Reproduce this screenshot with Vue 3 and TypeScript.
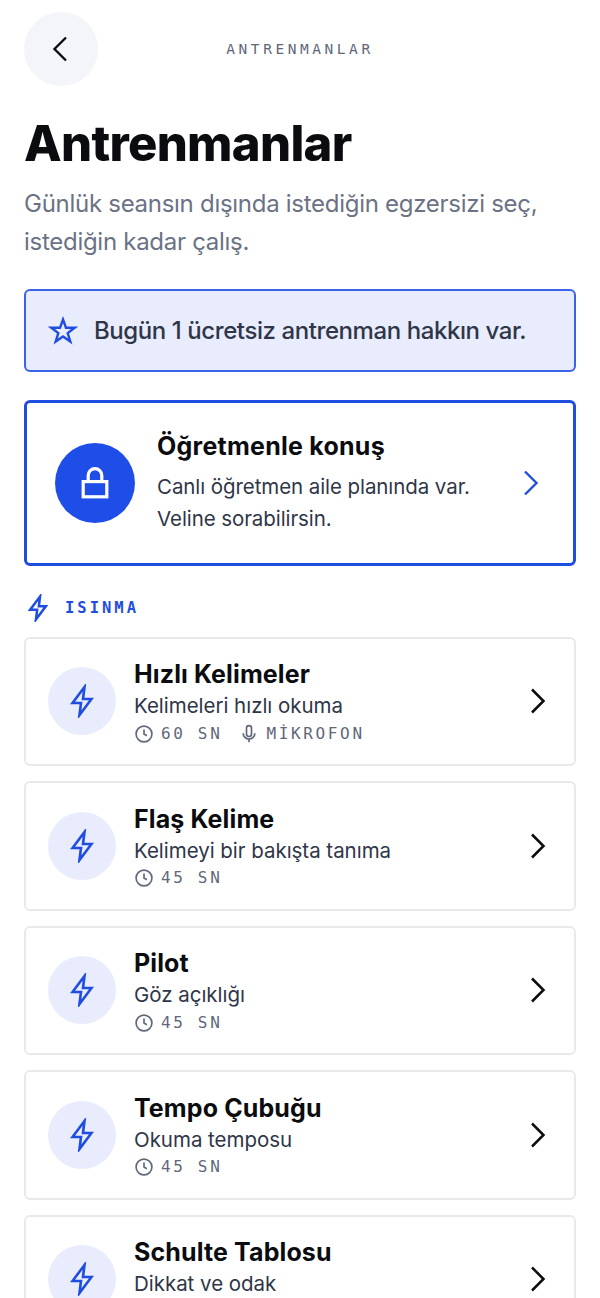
<script setup lang="ts">
interface Drill {
  title: string;
  desc: string;
  time: string;
  mic?: boolean;
}

const drills: Drill[] = [
  { title: "Hızlı Kelimeler", desc: "Kelimeleri hızlı okuma", time: "60 SN", mic: true },
  { title: "Flaş Kelime", desc: "Kelimeyi bir bakışta tanıma", time: "45 SN" },
  { title: "Pilot", desc: "Göz açıklığı", time: "45 SN" },
  { title: "Tempo Çubuğu", desc: "Okuma temposu", time: "45 SN" },
  { title: "Schulte Tablosu", desc: "Dikkat ve odak", time: "60 SN" },
];

const bolt = "M14.5 3 2.5 19H11L9.5 31l12-16H13L14.5 3z";
</script>

<template>
  <div class="page">
    <header class="topbar">
      <button class="back" aria-label="Geri">
        <svg width="30" height="30" viewBox="0 0 24 24" fill="none" stroke="currentColor" stroke-width="1.9">
          <path d="m16 2.8-9.2 9.2 9.2 9.2" />
        </svg>
      </button>
      <span class="topbar-title">ANTRENMANLAR</span>
    </header>

    <h1 class="heading">Antrenmanlar</h1>
    <p class="lead">Günlük seansın dışında istediğin egzersizi seç, istediğin kadar çalış.</p>

    <div class="banner">
      <svg width="30" height="30" viewBox="0 0 30 30" fill="none" stroke="currentColor" stroke-width="2.4">
        <path d="m15 3.5 3 8.3h8.6l-6.9 5.3 2.6 8.4-7.3-5-7.3 5 2.6-8.4-6.9-5.3H12l3-8.3z" />
      </svg>
      <span>Bugün 1 ücretsiz antrenman hakkın var.</span>
    </div>

    <div class="teacher">
      <div class="lock">
        <svg width="32" height="36" viewBox="0 0 32 36" fill="none" stroke="#fff" stroke-width="3.2">
          <rect x="4.2" y="16.6" width="23.6" height="15.2" />
          <path d="M9.2 16.6v-6.1a6.8 6.8 0 0 1 13.6 0v6.1" />
        </svg>
      </div>
      <div class="teacher-text">
        <div class="teacher-title">Öğretmenle konuş</div>
        <div class="teacher-desc">Canlı öğretmen aile planında var.<br />Veline sorabilirsin.</div>
      </div>
      <svg class="teacher-arrow" width="30" height="30" viewBox="0 0 24 24" fill="none" stroke="currentColor" stroke-width="1.9">
        <path d="m8 2.8 9.2 9.2L8 21.2" />
      </svg>
    </div>

    <div class="section">
      <svg class="section-bolt" width="20" height="28" viewBox="0 0 24 34" fill="none" stroke="currentColor" stroke-width="3">
        <path :d="bolt" />
      </svg>
      <span>ISINMA</span>
    </div>

    <div class="list">
      <div v-for="d in drills" :key="d.title" class="row">
        <div class="row-icon">
          <svg width="24" height="34" viewBox="0 0 24 34" fill="none" stroke="currentColor" stroke-width="2.6">
            <path :d="bolt" />
          </svg>
        </div>
        <div class="row-text">
          <div class="row-title">{{ d.title }}</div>
          <div class="row-desc">{{ d.desc }}</div>
          <div class="row-meta">
            <span class="meta-item">
              <svg width="20" height="20" viewBox="0 0 24 24" fill="none" stroke="currentColor" stroke-width="2">
                <circle cx="12" cy="12" r="9.5" />
                <path d="M12 6.5V12l3.5 2" />
              </svg>
              {{ d.time }}
            </span>
            <span v-if="d.mic" class="meta-item">
              <svg width="20" height="20" viewBox="0 0 24 24" fill="none" stroke="currentColor" stroke-width="2">
                <rect x="9" y="2" width="6" height="13" rx="3" />
                <path d="M5 11a7 7 0 0 0 14 0M12 18v4" />
              </svg>
              MİKROFON
            </span>
          </div>
        </div>
        <svg class="row-arrow" width="30" height="30" viewBox="0 0 24 24" fill="none" stroke="currentColor" stroke-width="2">
          <path d="m8 2.8 9.2 9.2L8 21.2" />
        </svg>
      </div>
    </div>
  </div>
</template>

<style>
html,
body {
  margin: 0;
  background: #fff;
  overflow: hidden;
}
</style>

<style scoped>
.page {
  height: 1298px;
  overflow: hidden;
  box-sizing: border-box;
  padding: 12px 24px 0;
  font-family: Inter, "Liberation Sans", sans-serif;
  background: #fff;
  color: #0b0c10;
}

.topbar {
  position: relative;
  display: flex;
  align-items: center;
  justify-content: center;
  height: 74px;
}

.back {
  position: absolute;
  left: 0;
  top: 0;
  width: 74px;
  height: 74px;
  display: flex;
  align-items: center;
  justify-content: center;
  padding: 0;
  border: 0;
  border-radius: 50%;
  background: #f3f5f8;
  color: #0b0c10;
}

.topbar-title {
  font-family: "DejaVu Sans Mono", monospace;
  font-size: 14.5px;
  letter-spacing: 3.55px;
  color: #5f6779;
}

.heading {
  margin: 28px 0 0;
  font-size: 49px;
  line-height: 60px;
  font-weight: 800;
  letter-spacing: -0.7px;
}

.lead {
  margin: 11px 0 0;
  font-size: 24px;
  line-height: 38px;
  letter-spacing: -0.28px;
  color: #6b7285;
}

.banner {
  margin-top: 28px;
  height: 83px;
  box-sizing: border-box;
  display: flex;
  align-items: center;
  gap: 16px;
  padding: 0 22px;
  background: #e8ecfd;
  border: 2px solid #3a63ea;
  border-radius: 6px;
  color: #1f4de0;
}

.banner span {
  font-size: 24px;
  font-weight: 500;
  letter-spacing: -0.42px;
  color: #2f3648;
}

.teacher {
  margin-top: 28px;
  height: 166px;
  box-sizing: border-box;
  display: flex;
  align-items: center;
  gap: 22px;
  padding: 0 28px;
  border: 3px solid #1f4de0;
  border-radius: 6px;
}

.lock {
  flex: none;
  width: 80px;
  height: 80px;
  border-radius: 50%;
  background: #1f4de8;
  display: flex;
  align-items: center;
  justify-content: center;
}

.teacher-text {
  flex: 1;
  min-width: 0;
  white-space: nowrap;
}

.teacher-title {
  font-size: 25px;
  line-height: 30px;
  font-weight: 700;
  letter-spacing: 0.25px;
}

.teacher-desc {
  margin-top: 10px;
  font-size: 20.5px;
  line-height: 32px;
  letter-spacing: -0.08px;
  color: #2f3648;
}

.teacher-arrow {
  color: #1f4de0;
  flex: none;
}

.section {
  margin-top: 27px;
  height: 30px;
  display: flex;
  align-items: center;
  gap: 17px;
  padding-left: 4px;
  color: #1f4de0;
  font-family: "DejaVu Sans Mono", monospace;
  font-size: 15.5px;
  font-weight: 700;
  letter-spacing: 3px;
}

.list {
  margin-top: 13.5px;
  display: flex;
  flex-direction: column;
  gap: 15px;
}

.row {
  flex: none;
  height: 129.5px;
  box-sizing: border-box;
  display: flex;
  align-items: center;
  gap: 18px;
  padding: 0 22px;
  border: 2px solid #e7e9ed;
  border-radius: 6px;
}

.row-icon {
  flex: none;
  width: 68px;
  height: 68px;
  border-radius: 50%;
  background: #e8ecfd;
  color: #1f4de0;
  display: flex;
  align-items: center;
  justify-content: center;
}

.row-text {
  flex: 1;
  min-width: 0;
  padding-top: 2px;
  white-space: nowrap;
}

.row-title {
  font-size: 25px;
  line-height: 33px;
  font-weight: 700;
  letter-spacing: 0.12px;
}

.row-desc {
  font-size: 20.5px;
  line-height: 29.5px;
  letter-spacing: -0.03px;
  color: #2f3648;
}

.row-meta {
  display: flex;
  gap: 17px;
  font-family: "DejaVu Sans Mono", monospace;
  font-size: 16px;
  line-height: 25.5px;
  letter-spacing: 2.65px;
  color: #5f6779;
}

.meta-item {
  display: inline-flex;
  align-items: center;
  gap: 7px;
}

.row-arrow {
  flex: none;
  color: #0b0c10;
}
</style>
